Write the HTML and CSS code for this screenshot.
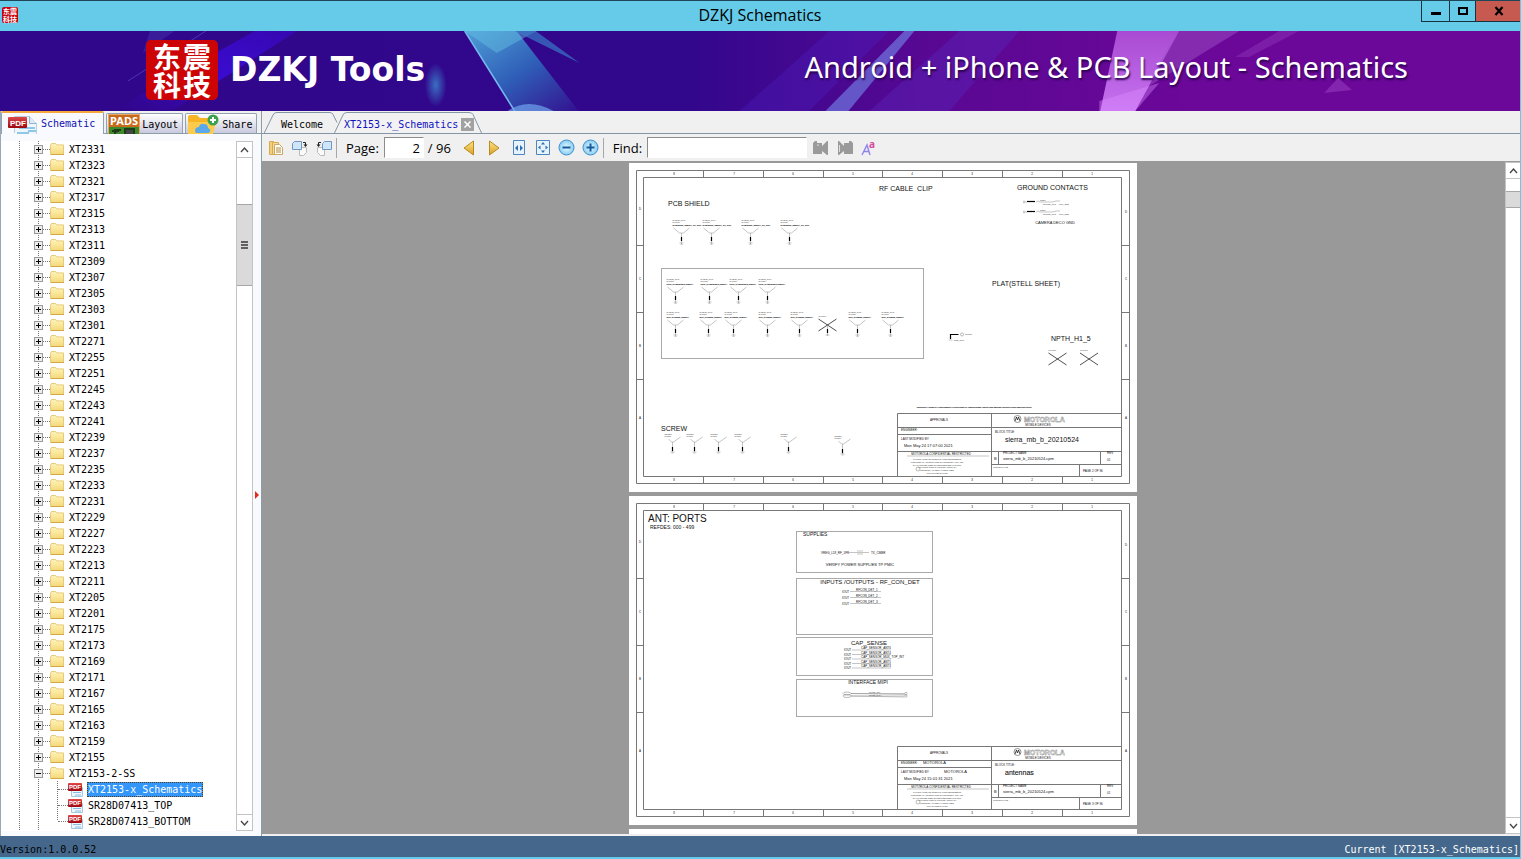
FILE: index.html
```html
<!DOCTYPE html>
<html lang="en">
<head>
<meta charset="utf-8">
<title>DZKJ Schematics</title>
<link rel="stylesheet" href="styles.css">
</head>
<body>
<svg class="defs" aria-hidden="true">
  <defs>
    <linearGradient id="gFolder" x1="0" y1="0" x2="0" y2="1"><stop offset="0" stop-color="#fff3bb"/><stop offset="1" stop-color="#f5d978"/></linearGradient>
    <linearGradient id="gGold" x1="0" y1="0" x2="0" y2="1"><stop offset="0" stop-color="#fbe58a"/><stop offset="1" stop-color="#dd9f22"/></linearGradient>
    <linearGradient id="gRed" x1="0" y1="0" x2="0" y2="1"><stop offset="0" stop-color="#e04848"/><stop offset="1" stop-color="#9c0810"/></linearGradient>
    <radialGradient id="gBall"><stop offset="0" stop-color="#eafaff"/><stop offset="1" stop-color="#86cdf3"/></radialGradient>
    <symbol id="folder" viewBox="0 0 14 14"><path d="M.5 12.500V3.200l1-1.700h4l1.200 1.400h6.800v9.600z" fill="url(#gFolder)" stroke="#e6cc78"/><path d="M1 12.500h13" stroke="#cfa94a"/></symbol>
    <symbol id="pdf" viewBox="0 0 16 16"><path d="M3.500 3.500h8l3 3v9h-11z" fill="#eef7fd" stroke="#a5c8de"/><path d="M5 11.500h8M7 14h6" stroke="#8dbbe0"/><rect x="0" y="2" width="14" height="8" rx="1" fill="url(#gRed)"/><text x="1" y="8" class="pdf-text pdf-small">PDF</text></symbol>
  </defs>
</svg>

<header class="titlebar">
  <span class="app-icon"><span>东震</span><span>科技</span></span>
  <h1 class="title">DZKJ Schematics</h1>
  <div class="window-buttons">
    <button class="wb wb-min" aria-label="Minimize"><svg width="10" height="10"><path d="M0 7.500h10" stroke="#000" stroke-width="3"/></svg></button>
    <button class="wb wb-max" aria-label="Maximize"><svg width="10" height="10"><path d="M1 2h8v6H1z" fill="none" stroke="#000" stroke-width="2"/></svg></button>
    <button class="wb wb-close" aria-label="Close"><svg width="10" height="10"><path d="M1.500 1l7 8M8.500 1l-7 8" stroke="#000" stroke-width="2.200"/></svg></button>
  </div>
</header>

<section class="banner">
  <svg class="banner-art" viewBox="0 0 1521 80" preserveAspectRatio="none" aria-hidden="true">
    <defs>
      <linearGradient id="cy" x1="0" y1="0" x2="1" y2="1"><stop offset="0" stop-color="#4f9fd6"/><stop offset=".5" stop-color="#2f5fb8"/><stop offset="1" stop-color="#33108f"/></linearGradient>
      <linearGradient id="vi" x1="0" y1="0" x2="0" y2="1"><stop offset="0" stop-color="#a94bd2"/><stop offset="1" stop-color="#c672f0"/></linearGradient>
      <linearGradient id="bl" x1="0" y1="1" x2="1" y2="0"><stop offset="0" stop-color="#3a08a8" stop-opacity="0"/><stop offset=".5" stop-color="#3a0bd0"/><stop offset="1" stop-color="#3608b0"/></linearGradient>
      <radialGradient id="glow"><stop offset="0" stop-color="#3a7cc8" stop-opacity=".9"/><stop offset="1" stop-color="#3a7cc8" stop-opacity="0"/></radialGradient>
    </defs>
    <path d="M255 0h42L172 80h-60z" fill="url(#bl)"/>
    <path d="M206 0L128 50" stroke="#4a38b0"/><path d="M150 0h25l-32 22z" fill="#4430a8" opacity=".5"/>
    <ellipse cx="436" cy="54" rx="11" ry="22" fill="url(#glow)"/>
    <path d="M465 0h52l62 80h-64z" fill="url(#cy)"/>
    <path d="M465 0l50 80" stroke="#78b9ef" stroke-width="1.500"/>
    <path d="M465 0h72l-40 22z" fill="#65c3e4" opacity=".45"/>
    <path d="M515 0l65 32-44-32z" fill="#3978c8" opacity=".7"/>
    <path d="M508 80q20-14 46 0z" fill="#6fa4ec" opacity=".7"/>
    <path d="M740 80L830 0h60l-80 80z" fill="#4c20c0" opacity=".35"/>
    <path d="M826 80L905 0h10l-66 80z" fill="#6f78e0" opacity=".7"/>
    <path d="M870 80l90-80h60l-70 80z" fill="#5a1fb4" opacity=".5"/>
    <path d="M1118 0h62l-44 80h-35z" fill="url(#vi)"/>
    <path d="M1100 80v-10l60-18-24 28z" fill="#dc8cff" opacity=".4"/>
    <path d="M1180 0h60l-90 55 15-32z" fill="#a050c8" opacity=".5"/>
    <path d="M1280 0h20l-50 26h-14z" fill="#9a48c4" opacity=".35"/>
    <path d="M1339 47l14 12-28 3z" fill="#8a2db4" opacity=".8"/>
  </svg>
  <div class="brand">
    <div class="logo"><span>东</span><span>震</span><span>科</span><span>技</span></div>
    <span class="brand-name">DZKJ Tools</span>
  </div>
  <span class="tagline">Android + iPhone &amp; PCB Layout - Schematics</span>
</section>

<main class="workspace">
  <aside class="sidebar">
    <nav class="side-tabs">
      <button class="side-tab active">
        <svg width="33" height="20" viewBox="0 0 33 20"><path d="M7.500 19V2.500h15l7 7V20" fill="#eef6fc" stroke="#b9cfe0"/><path d="M22.500 2.500v7h7" fill="#dceaf5" stroke="#93b4cc"/><path d="M12 14h16M21 17h8M10 19h12" stroke="#8cc8ea" stroke-width="2"/><rect x="1" y="3" width="19" height="11" rx="1" fill="url(#gRed)"/><text x="3" y="12" class="pdf-text pdf-big">PDF</text></svg>
        Schematic</button>
      <button class="side-tab">
        <svg width="32" height="20" viewBox="0 0 32 20"><rect width="32" height="20" fill="#c76a1c"/><rect y="13" width="32" height="7" fill="#3c8a2c"/><rect x=".5" y=".5" width="31" height="20" fill="none" stroke="#e9a765"/><path d="M4 17h7M7 20v-4h6M17 15h9v6h-9z" stroke="#1d3d18" stroke-width="2" fill="#444"/><text x="2" y="11" class="pads-text">PADS</text></svg>
        <span>Layout</span></button>
      <button class="side-tab share">
        <svg width="32" height="20" viewBox="0 0 32 20"><path d="M1 20V3q0-2 2-2h7l3 3h11q2 0 2 2v14z" fill="#f7b526"/><path d="M1 8h28l-3 12H1z" fill="#fdcb4b"/><path d="M8 17q0-4 4-4 1-4 5-3 4 0 4 4 3 1 2 4l-2 1H9z" fill="#5aa9ea"/><circle cx="26" cy="6" r="5.500" fill="#39a24a"/><path d="M26 3v6M23 6h6" stroke="#fff" stroke-width="2"/></svg>
        <span>Share</span></button>
    </nav>
    <div class="tree-box">
      <ul class="tree" id="tree"></ul>
      <div class="scrollbar tree-scroll">
        <button class="sb-btn" aria-label="Scroll up"><svg width="9" height="6"><path d="M1 5l3.500-4L8 5" fill="none" stroke="#444" stroke-width="1.300"/></svg></button>
        <div class="sb-before"></div>
        <div class="sb-thumb"><i></i><i></i><i></i></div>
        <div class="sb-rest"></div>
        <button class="sb-btn" aria-label="Scroll down"><svg width="9" height="6"><path d="M1 1l3.500 4L8 1" fill="none" stroke="#444" stroke-width="1.300"/></svg></button>
      </div>
    </div>
    <span class="splitter-arrow"></span>
  </aside>

  <section class="document">
    <nav class="doc-tabs">
      <button class="doc-tab"><svg class="tab-shape" width="78" height="22" aria-hidden="true"><path d="M0 21.500L9 3q1-2.500 4-2.500h53q2 0 3 2l4 8" fill="none" stroke="#8496a6"/></svg><span>Welcome</span></button>
      <button class="doc-tab current"><svg class="tab-shape" width="152" height="22" aria-hidden="true"><path d="M0 22L9 3q1-2.500 4-2.500h122q3 0 4 2l9 19.500" fill="#f2f2f3" stroke="#8496a6"/></svg><span>XT2153-x_Schematics</span><span class="tab-close"><svg width="7" height="7"><path d="M.5.5l6 6M6.500.5l-6 6" stroke="#fff" stroke-width="1.500"/></svg></span></button>
    </nav>
    <div class="toolbar">
      <button class="tool" aria-label="Open"><svg width="16" height="16"><path d="M1.500 1.500h4v13h-4z" fill="#f3cf7c" stroke="#d9a94e"/><path d="M4.500 2.500h6v12h-6z" fill="#f7dc98" stroke="#d9a94e"/><path d="M6.500 4.500h5l3 3v7h-8z" fill="#fffdf4" stroke="#c9a866"/><path d="M8 8h5M8 10h5M8 12h5" stroke="#b08b4a"/></svg></button>
      <button class="tool" aria-label="Rotate right"><svg width="16" height="16"><path d="M7.500 7.500h7v5l-3 3h-4z" fill="#fafafa" stroke="#bbb"/><path d="M.5 3.500l2-2h7v8h-9z" fill="#cfe6fa" stroke="#7397c0"/><path d="M11 2.500h2.500V6" fill="none" stroke="#222"/><path d="M11.500 4.500h4l-2 2.500z" fill="#222"/></svg></button>
      <button class="tool" aria-label="Rotate left"><svg width="16" height="16"><path d="M1.500 7.500h7v8h-4l-3-3z" fill="#fafafa" stroke="#bbb"/><path d="M6.500 3.500l2-2h7v8h-9z" fill="#cfe6fa" stroke="#7397c0"/><path d="M5 2.500H2.500V6" fill="none" stroke="#222"/><path d="M.5 4.500h4L2.500 7z" fill="#222"/></svg></button>
      <span class="sep"></span>
      <label class="tb-label" for="page">Page:</label>
      <input class="page-input" id="page" type="text" value="2">
      <span class="total">/ 96</span>
      <button class="tool wide" aria-label="Previous page"><svg width="12" height="16"><path d="M10.500 1v14L1 8z" fill="url(#gGold)" stroke="#b98a1e"/></svg></button>
      <button class="tool wide" aria-label="Next page"><svg width="12" height="16"><path d="M1.500 1v14L11 8z" fill="url(#gGold)" stroke="#b98a1e"/></svg></button>
      <button class="tool" aria-label="Fit width"><svg width="14" height="16"><path d="M1.500.5h11v14h-11z" fill="#e6f2fc" stroke="#4f86bd"/><path d="M6 5v6L3 8zM8 5v6l3-3z" fill="#2d6fb2"/></svg></button>
      <button class="tool" aria-label="Fit page"><svg width="14" height="16"><path d="M.5.500h13v14H.5z" fill="#e6f2fc" stroke="#4f86bd"/><path d="M7 2l2 2.500H5zM7 13l2-2.500H5zM2 7.500L4.500 5.500v4zM12 7.500L9.500 5.500v4z" fill="#2d6fb2"/></svg></button>
      <button class="tool" aria-label="Zoom out"><svg width="17" height="17"><circle cx="8.500" cy="8.500" r="7.500" fill="url(#gBall)" stroke="#3f8fcb"/><path d="M4.500 8.500h8" stroke="#155a9c" stroke-width="2"/></svg></button>
      <button class="tool" aria-label="Zoom in"><svg width="17" height="17"><circle cx="8.500" cy="8.500" r="7.500" fill="url(#gBall)" stroke="#3f8fcb"/><path d="M4.500 8.500h8M8.500 4.500v8" stroke="#155a9c" stroke-width="2"/></svg></button>
      <span class="sep"></span>
      <label class="tb-label" for="find">Find:</label>
      <input class="find-input" id="find" type="text">
      <button class="tool" aria-label="Find previous"><svg width="16" height="16"><path d="M0 3l2-2h2v2h5v3l5-5h1v14h-1L9 11v3H0z" fill="#9a9a9a"/><path d="M4 5h2" stroke="#ddd"/></svg></button>
      <button class="tool" aria-label="Find next"><svg width="16" height="16"><path d="M16 3l-2-2h-2v2H7v3L2 1H1v14h1l5-4v3h9z" fill="#9a9a9a"/><path d="M2.500 5v7" stroke="#ddd"/></svg></button>
      <button class="tool" aria-label="Match case"><svg width="16" height="16"><path d="M1 15L6 5l3 10M3 11.500h5" fill="none" stroke="#8f84ee" stroke-width="1.400"/><text x="8" y="8" class="case-a">a</text></svg></button>
    </div>
    <div class="viewer">
      <div class="pages" id="pages"></div>
      <div class="scrollbar view-scroll">
        <button class="sb-btn" aria-label="Scroll up"><svg width="9" height="6"><path d="M1 5l3.500-4L8 5" fill="none" stroke="#444" stroke-width="1.300"/></svg></button>
        <div class="sb-before"></div>
        <div class="sb-thumb"></div>
        <div class="sb-rest"></div>
        <button class="sb-btn" aria-label="Scroll down"><svg width="9" height="6"><path d="M1 1l3.500 4L8 1" fill="none" stroke="#444" stroke-width="1.300"/></svg></button>
      </div>
    </div>
  </section>
</main>

<footer class="status"><span>Version:1.0.0.52</span><span>Current [XT2153-x_Schematics]</span></footer>
<script src="app.js"></script>
</body>
</html>
```

FILE: styles.css
```css
* { box-sizing: border-box; }
body {
  margin: 0;
  height: 100vh;
  display: flex;
  flex-direction: column;
  overflow: hidden;
  background: #f0f0f0;
  border-right: 1px solid #66cbe9;
  font-family: "DejaVu Sans Mono", "Noto Sans CJK SC", monospace;
  font-size: 10px;
  color: #000;
}
button { font: inherit; color: inherit; border: 0; background: none; padding: 0; margin: 0; }
svg { display: block; flex: none; }
.defs { position: absolute; width: 0; height: 0; }

/* title bar */
.titlebar {
  position: relative;
  flex: none;
  height: 31px;
  display: flex;
  align-items: center;
  justify-content: center;
  background: #66cbe9;
  border-top: 1px solid #1d4658;
}
.app-icon {
  position: absolute;
  left: 2px;
  top: 6px;
  width: 16px;
  height: 16px;
  border-radius: 2px;
  background: #c8000c;
  color: #fff;
  font: 700 7px/8px "Noto Sans CJK SC", sans-serif;
  text-align: center;
}
.app-icon span { display: block; }
.title { margin: 0; padding-bottom: 2px; font: 400 16px/20px "Open Sans", "Noto Sans", sans-serif; }
.window-buttons { position: absolute; right: -1px; top: 0; display: flex; height: 21px; }
.wb { display: flex; align-items: center; justify-content: center; border: 1px solid #16323e; border-top: 0; border-right: 0; }
.wb-min { width: 28px; }
.wb-max { width: 26px; }
.wb-close { width: 46px; background: #c75a50; }

/* banner */
.banner {
  position: relative;
  flex: none;
  height: 80px;
  display: flex;
  align-items: center;
  justify-content: space-between;
  padding: 0 112px 2px 146px;
  background: linear-gradient(90deg, #30068a 0%, #31078c 45%, #5a0894 62%, #6b0799 78%, #6b0799 100%);
  color: #fff;
  overflow: hidden;
}
.banner-art { position: absolute; inset: 0; width: 100%; height: 100%; }
.brand { position: relative; display: flex; align-items: center; gap: 12px; }
.logo {
  width: 72px;
  height: 60px;
  padding: 2px 6px;
  border-radius: 5px;
  background: #cc0405;
  display: grid;
  grid-template-columns: 1fr 1fr;
  place-items: center;
  font: 700 28px/26px "Noto Sans CJK SC", sans-serif;
}
.brand-name { font: 700 33px/40px "DejaVu Sans", sans-serif; }
.tagline { position: relative; padding-bottom: 6px; font: 400 29px/36px "Noto Sans", sans-serif; text-shadow: 1px 2px 2px #2a0450; }

/* workspace */
.workspace { flex: 1; min-height: 0; display: flex; }
.sidebar {
  position: relative;
  width: 262px;
  flex: none;
  display: flex;
  flex-direction: column;
  border-left: 1px solid #9aa7b5;
  border-right: 1px solid #8b9cab;
  background: #f9fafe;
}
.side-tabs { display: flex; align-items: flex-end; height: 23px; gap: 2px; background: #f0f0f0; border-bottom: 1px solid #8b9cab; }
.side-tab {
  display: flex;
  align-items: center;
  gap: 2px;
  height: 20px;
  padding: 0 4px 0 1px;
  border: 1px solid #93a2b3;
  border-bottom: 0;
  border-radius: 2px 2px 0 0;
  background: linear-gradient(#fff, #c9c9df);
}
.side-tab span { padding-top: 2px; }
.side-tab.share { gap: 3px; }
.side-tab.active {
  height: 23px;
  gap: 1px;
  padding: 0 8px 0 5px;
  margin-bottom: -1px;
  border-top: 2px solid #f7a83b;
  background: #f9fafe;
  color: #1010b4;
}
.tree-box { flex: 1; min-height: 0; display: flex; margin: 7px 8px 5px 0; background: #fff; }
.tree { flex: 1; margin: 0; padding: 0; list-style: none; overflow: hidden; }
.node {
  display: flex;
  align-items: center;
  height: 16px;
  padding-left: 33px;
  white-space: nowrap;
  background:
    repeating-linear-gradient(#777 0 1px, #fff 1px 2px) 18px 0 / 1px 100% no-repeat,
    repeating-linear-gradient(#777 0 1px, #fff 1px 2px) 37px 0 / 1px 100% no-repeat;
}
.toggle { width: 9px; height: 9px; flex: none; display: grid; place-items: center; border: 1px solid #999; background: #eee; }
.dots { width: 7px; flex: none; border-top: 1px dotted #777; }
.node-name { margin-left: 4px; padding: 2px 1px 0; line-height: 14px; }
.leaf {
  padding-left: 57px;
  background:
    repeating-linear-gradient(#777 0 1px, #fff 1px 2px) 18px 0 / 1px 100% no-repeat,
    repeating-linear-gradient(#777 0 1px, #fff 1px 2px) 37px 0 / 1px 100% no-repeat,
    repeating-linear-gradient(#777 0 1px, #fff 1px 2px) 56px 0 / 1px 100% no-repeat;
}
.leaf.last { background-size: 1px 100%, 1px 100%, 1px 8px; }
.leaf .dots { width: 10px; }
.leaf .node-name { margin-left: 3px; }
.leaf .selected { padding-top: 1px; background: #3296fb; color: #fff; outline: 1px dotted #5a3a10; outline-offset: -1px; }
.pdf-text { font-family: "Liberation Sans", sans-serif; font-weight: 700; fill: #fff; }
.pdf-small { font-size: 6px; }
.pdf-big { font-size: 8px; }
.pads-text { font: 700 11px "Noto Sans", sans-serif; fill: #fff; }
.splitter-arrow { position: absolute; right: 2px; top: 380px; border: 4px solid transparent; border-left: 4px solid #e02a1c; border-right: 0; }

/* scroll bars */
.scrollbar { flex: none; display: flex; flex-direction: column; background: #fff; border: 1px solid #c4c4c4; }
.sb-btn { flex: none; display: grid; place-items: center; height: 16px; background: #fff; border-bottom: 1px solid #c4c4c4; }
.sb-btn:last-child { border-bottom: 0; border-top: 1px solid #c4c4c4; }
.sb-thumb { flex: none; background: #dadada; border: solid #a6a6a6; border-width: 1px 0; display: flex; flex-direction: column; align-items: center; justify-content: center; gap: 1px; }
.sb-thumb i { width: 7px; height: 2px; background: #606060; }
.sb-rest { flex: 1; }
.tree-scroll { width: 17px; }
.tree-scroll .sb-before { height: 46px; flex: none; }
.tree-scroll .sb-thumb { height: 82px; }
.view-scroll { width: 15px; border-right: 0; }
.view-scroll .sb-before { height: 12px; flex: none; }
.view-scroll .sb-thumb { height: 17px; }

/* document */
.document { flex: 1; min-width: 0; display: flex; flex-direction: column; }
.doc-tabs { display: flex; align-items: flex-end; height: 23px; padding-left: 2px; border-bottom: 1px solid #8496a6; }
.doc-tab { position: relative; display: flex; align-items: center; height: 20px; padding: 2px 0 0 17px; width: 70px; white-space: nowrap; }
.doc-tab.current { width: 152px; padding-left: 10px; color: #1010c0; }
.tab-shape { position: absolute; left: 0; bottom: -1px; z-index: -1; }
.tab-close { width: 13px; height: 13px; margin-left: 3px; display: grid; place-items: center; background: #a2a2a2; }
.toolbar {
  display: flex;
  align-items: center;
  height: 28px;
  padding-left: 2px;
  border-bottom: 1px solid #999;
  font: 400 13px/20px "Open Sans", "Noto Sans", sans-serif;
}
.tool { width: 24px; height: 24px; display: grid; place-items: center; }
.tool svg { overflow: visible; }
.tool.wide { width: 25px; }
.sep { width: 1px; height: 20px; background: #a8a8a8; }
.tb-label { padding: 0 5px 0 9px; }
.toolbar input { height: 21px; border: 1px solid #fff; border-top-color: #8c8c8c; border-left-color: #8c8c8c; border-radius: 0; background: #fff; font: inherit; outline: 0; }
.page-input { width: 40px; padding: 0 3px; text-align: right; }
.find-input { width: 160px; margin-right: 2px; }
.total { padding: 0 6px 0 4px; }
.case-a { font: 700 10px "Noto Sans", sans-serif; fill: #d6489c; }
.viewer { flex: 1; min-height: 0; display: flex; margin-bottom: 2px; background: #999; }
.pages { flex: 1; overflow: hidden; display: flex; flex-direction: column; align-items: center; gap: 4px; padding: 1px 2px 0 0; }
.page { width: 508px; height: 329px; flex: none; background: #fff; font-family: "Liberation Sans", sans-serif; }

/* schematic drawing */
.page path, .page rect { fill: none; stroke: #777; stroke-width: 1; }
.page .thin { stroke: #aaa; }
.page .hair { stroke: #888; stroke-width: .5; }
.page .bold { stroke: #000; stroke-width: 1.2; }
.page .cross { stroke: #222; stroke-width: .8; }
.page text { fill: #111; font-size: 3px; }
.page .t2 { font-size: 2px; fill: #333; }
.page .t4 { font-size: 4px; }
.page .t5 { font-size: 5px; }
.page .t6 { font-size: 6px; }
.page .t7 { font-size: 7px; }
.page .t10 { font-size: 10px; }
.page .mid { text-anchor: middle; }
.page .strong { stroke: #222; stroke-width: .1; }
.page .moto { font-size: 7px; font-weight: 700; fill: #fff; stroke: #777; stroke-width: .4; }

/* status bar */
.status {
  flex: none;
  height: 23px;
  display: flex;
  justify-content: space-between;
  align-items: center;
  padding: 5px 2px 0 0;
  background: #44678b;
  border-bottom: 2px solid #66cbe9;
  margin-right: -1px;
}
.status span:first-child { color: #000; }
.status span:last-child { color: #fff; }
```

FILE: app.js
```javascript
const folders = ('2331 2323 2321 2317 2315 2313 2311 2309 2307 2305 2303 2301 2271 2255 2251 2245 2243 2241 ' +
  '2239 2237 2235 2233 2231 2229 2227 2223 2213 2211 2205 2201 2175 2173 2169 2171 2167 2165 2163 2159 2155')
  .split(' ').map(n => 'XT' + n);

const folderRow = (name, open) => `<li class="node"><button class="toggle" aria-label="${open ? 'Collapse' : 'Expand'}">` +
  `<svg width="7" height="7"><path d="M1 3.5h5${open ? '' : 'M3.5 1v5'}" stroke="#000"/></svg></button>` +
  `<span class="dots"></span><svg width="14" height="14"><use href="#folder"/></svg><span class="node-name">${name}</span></li>`;
const leafRow = (name, cls, sel) => `<li class="node leaf ${cls}"><span class="dots"></span>` +
  `<svg width="16" height="16"><use href="#pdf"/></svg><span class="node-name ${sel}">${name}</span></li>`;

document.getElementById('tree').innerHTML =
  folders.map(f => folderRow(f, false)).join('') +
  folderRow('XT2153-2-SS', true) +
  leafRow('XT2153-x_Schematics', '', 'selected') +
  leafRow('SR28D07413_TOP', '', '') +
  leafRow('SR28D07413_BOTTOM', 'last', '') +
  folderRow('', false);

const text = (x, y, s, cls = '') => `<text x="${x}" y="${y}" class="${cls}">${s}</text>`;
const path = (d, cls = '') => `<path d="${d}" class="${cls}"/>`;

function frame() {
  const xs = [74.5, 134.5, 194.5, 253.5, 313.5, 373.5, 433.5];
  const ys = [82.5, 149.5, 216.5];
  let out = path('M7.500 7.500h493v313h-493z M14.500 14.500h478v299h-478z');
  out += path(xs.map(x => `M${x} 7v7M${x} 314v6`).join(''));
  out += path(ys.map(y => `M7 ${y}h7M493 ${y}h7`).join(''));
  [45, 105, 164, 224, 283, 343, 403, 463].forEach((x, i) => {
    out += text(x, 12, 8 - i, 'mid') + text(x, 318, 8 - i, 'mid');
  });
  [46, 116, 183, 255].forEach((y, i) => {
    out += text(11, y + 1, 'DCBA'[i], 'mid') + text(497, y + (i ? 1 : 4), 'DCBA'[i], 'mid');
  });
  return out;
}

function titleBlock(p) {
  let out = path('M268.500 313V250.500H492M362.500 250v63M268 264.500h224M268 271.500h94M268 288.500h224M362 301.500h130M369.500 288v13M471.500 288v13M450.500 301v12');
  out += text(310, 258, 'APPROVALS', 'mid') + text(272, 268, 'ENGINEER:') + text(272, 277, 'LAST MODIFIED BY:');
  if (p.owner) out += text(294, 268, p.owner, 't4') + text(315, 277, p.owner, 't4');
  out += text(275, 284, p.date, 't4') + text(312, 292, 'MOTOROLA CONFIDENTIAL RESTRICTED', 'mid') + path('M278 293h82', 'hair');
  ['THIS DRAWING OR SPECIFICATION REPRESENTS', 'PROPRIETARY INFORMATION OF MOTOROLA INC AND', 'SHALL NOT BE USED OR REPRODUCED WITHOUT',
    'AUTHORIZATION IN WRITING. COMPANY', 'MOTOROLA MATERIAL CONTAINED', 'IN THIS PUBLICATION'].forEach((s, i) => {
    out += text(308, 297 + i * 3 - Math.floor(i / 3), s, 't2 mid');
  });
  out += '<circle cx="289" cy="306" r="2" fill="none" stroke="#777" stroke-width=".5"/>';
  out += '<circle cx="388.500" cy="256" r="3.500" fill="none" stroke="#666" stroke-width=".7"/>' + path('M386 258l1.500-4 1 3 1-3 1.500 4', 'cross');
  out += text(395, 259, 'MOTOROLA', 'moto') + text(409, 263, 'MOBILE DEVICES', 'mid');
  out += text(366, 270, 'BLOCK TITLE:') + text(376, 279, p.title, p.strong ? 't7 strong' : 't7');
  out += text(374, 291, 'PROJECT NAME') + text(374, 297, 'sierra_mb_b_20210524.cpm', 't4') + text(365, 297, 'B', 't4');
  out += text(478, 291, 'REV') + text(478, 298, '01') + text(364, 305, 'CUSTOM NAME', 't2') + text(454, 309, `PAGE ${p.no} OF 96`);
  return out;
}

/* Shield contact: part labels, funnel, stem and ground mark; (x, y) is the funnel apex. */
function contact(x, y, label) {
  return text(x - 9, y - 12, 'SHIELD_CLIP', 't2') + text(x - 9, y - 10, 'SH1701', 't2') + text(x - 9, y - 7, label, 't2 strong') +
    path(`M${x - 8} ${y - 5}l6 5h4l6-5M${x} ${y}v11M${x - 2} ${y + 10}h4M${x - 1} ${y + 11.500}h2`, 'hair') + path(`M${x} ${y + 4}v4`, 'bold');
}
function screw(x, y) {
  return text(x - 8, y - 7, 'SCREW', 't2') + text(x - 8, y - 5, 'MH201', 't2') +
    path(`M${x - 4} ${y - 3}l3 3h2l7-5M${x} ${y}v10M${x - 2} ${y + 10}h4M${x - 1} ${y + 11}h2`, 'hair') + path(`M${x} ${y + 5}v4`, 'bold');
}
const cross = (x, y) => path(`M${x - 9} ${y - 6}l18 12M${x + 9} ${y - 6}l-18 12`, 'cross') + text(x - 9, y - 8, 'MH1701', 't2');

function sheetMechanical() {
  let out = text(250, 28, 'RF CABLE&#160; CLIP', 't7') + text(388, 27, 'GROUND CONTACTS', 't7') + text(39, 43, 'PCB SHIELD', 't7') +
    text(363, 123, 'PLAT(STELL SHEET)', 't7') + text(422, 178, 'NPTH_H1_5', 't7') + text(32, 268, 'SCREW', 't7') +
    text(426, 61, 'CAMERA DECO GND', 'mid t4');
  [52, 82, 121, 160].forEach(x => { out += contact(x + .5, 70, 'SHIELDING_SIERRA_RF_CLIP'); });
  out += '<rect x="32.500" y="105.500" width="262" height="90" class="thin"/>';
  [46, 80, 109, 138].forEach(x => { out += contact(x + .5, 129, 'PMIC_SHIELDING2_SIERRA'); });
  [46, 79, 104, 138, 170, 228, 261].forEach(x => { out += contact(x + .5, 162, 'WIFI_SHIELD2_SIERRA'); });
  out += cross(198.5, 162) + path('M198.500 162v11M196.500 172h4', 'hair') + path('M198.500 166v4', 'bold');
  out += cross(428.5, 196) + cross(460, 196);
  [43, 65, 89, 113, 159].forEach(x => { out += screw(x + .5, 279); });
  out += screw(213.5, 281);
  [39, 49].forEach(y => {
    out += path(`M398 ${y - .5}h8`, 'bold') + path(`M407 ${y}l2-1 2 1h12l4-1h4M395 ${y - 1.5}v3M394 ${y}h4`, 'hair') +
      text(411, y - 1, 'GND1', 't2') + text(414, y + 3, 'SPRING_CTC', 't2') + text(430, y + 3, 'CLIP_GND', 't2');
  });
  out += path('M321.500 176v-4.500h8', 'bold') + '<circle cx="333" cy="171.500" r="1.500" fill="none" stroke="#777" stroke-width=".5"/>' +
    text(336, 172, 'TP1801', 't2') + text(325, 178, 'GND_CLIP', 't2') + path('M319.500 177h4', 'hair');
  out += text(345, 245, 'MOTOROLA MOBILITY CONFIDENTIAL PROPRIETARY RESTRICTED AND TRADE SECRET INFORMATION REGISTRATION', 't2 mid strong');
  return out + titleBlock({ date: 'Mon May 24 17:07:00 2021', title: 'sierra_mb_b_20210524', no: 2 });
}

function sheetAntenna() {
  let out = text(19, 26, 'ANT: PORTS', 't10') + text(21, 33, 'REFDES: 000 - 499', 't5');
  out += [[35.5, 41], [82.5, 56], [141.5, 38], [183.5, 37]].map(([y, h]) => `<rect x="167.500" y="${y}" width="136" height="${h}" class="thin"/>`).join('');
  out += text(174, 40, 'SUPPLIES', 't5') + text(231, 70, 'VERIFY POWER SUPPLIES TP PMIC', 't4 mid');
  out += text(192, 58, 'VREG_L18_RF_1P8') + path('M217 56.500h23M228 55h6M228 58h6', 'hair') + text(242, 58, 'TX_CMBR');
  out += text(241, 88, 'INPUTS /OUTPUTS - RF_CON_DET', 't6 mid');
  [96, 102, 108].forEach((y, i) => { out += text(213, y + 1, 'IOUT') + path(`M221 ${y - .5}h31`, 'hair') + text(227, y - 1, `RFCON_DET_${i + 1}`); });
  out += text(240, 149, 'CAP_SENSE', 't6 mid');
  ['CAP_SENSOR_ANT6', 'CAP_SENSOR_ANT4', 'CAP_SENSOR_MUX_TOP_INT', 'CAP_SENSOR_ANT5', 'CAP_SENSOR_ANT3'].forEach((s, i) => {
    const y = 154 + i * 4.5;
    out += text(215, y + 1, 'IOUT') + path(`M223 ${y}h39`, 'hair') + text(232, y - 1, s);
  });
  out += text(239, 188, 'INTERFACE MIPI', 't5 mid');
  [197.5, 200].forEach((y, i) => { out += path(`M222 ${y}h54v-1h2v2h-2z`, 'hair') + `<ellipse cx="218" cy="${y}" rx="4" ry="1.500" fill="none" stroke="#777" stroke-width=".5"/>` + text(240, y - .5, i ? 'RFFE1_DATA' : 'RFFE1_CLK', 't2'); });
  return out + titleBlock({ date: 'Mon May 24 15:01:31 2021', title: 'antennas', strong: true, owner: 'MOTOROLA', no: 3 });
}

document.getElementById('pages').innerHTML = [sheetMechanical(), sheetAntenna(), '']
  .map(body => `<svg class="page" viewBox="0 0 508 329">${body ? frame() + body : ''}</svg>`).join('');
```
